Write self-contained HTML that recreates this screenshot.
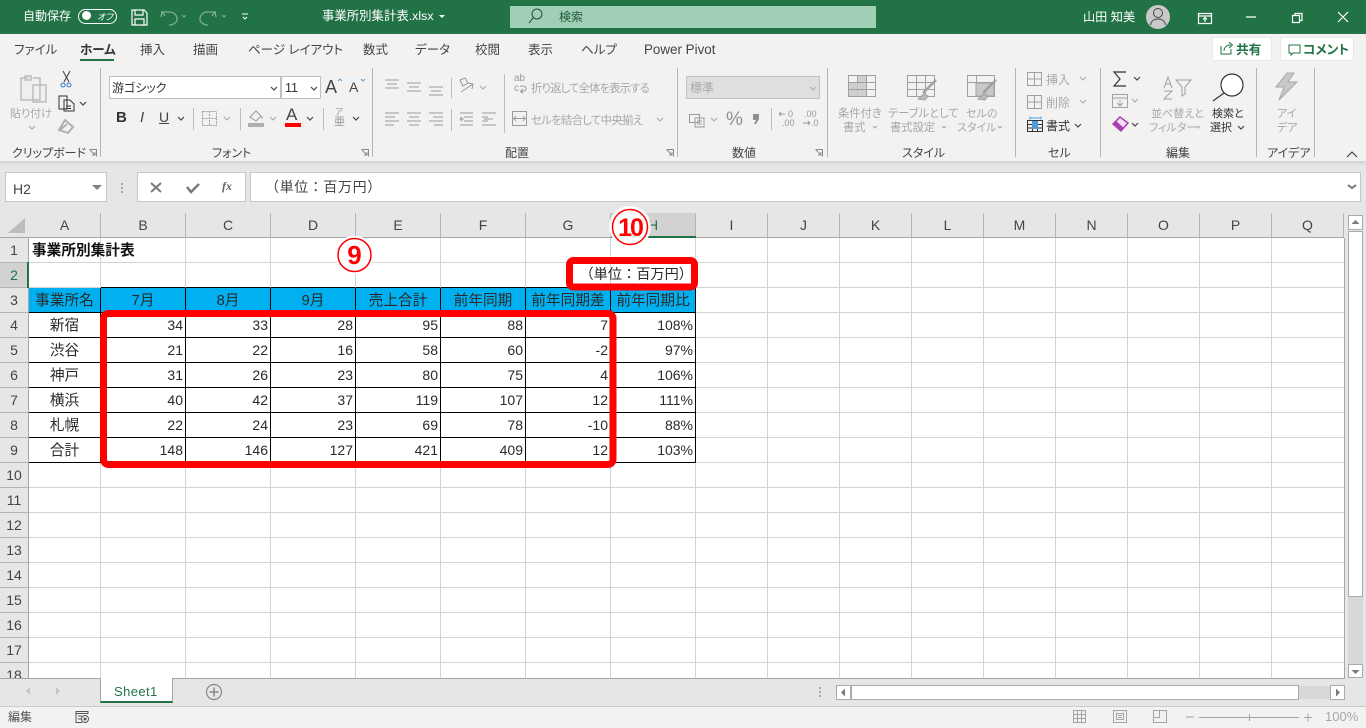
<!DOCTYPE html>
<html lang="ja"><head><meta charset="utf-8"><title>事業所別集計表.xlsx - Excel</title>
<style>
html,body{margin:0;padding:0}
body{width:1366px;height:728px;overflow:hidden;position:relative;background:#e6e6e6;font-family:"Liberation Sans","Noto Sans CJK JP",sans-serif;color:#444}
.a{position:absolute}
.t{position:absolute;white-space:nowrap;line-height:16px;font-size:12px;color:#444;font-feature-settings:"palt"}
.g{color:#a8a8a8}.w{color:#fff}
.tab{font-size:12.5px;top:42px;color:#444}
.gl{top:145px;color:#444;font-size:12px}
#sep i{position:absolute;top:68px;height:89px;width:1px;background:#b8b6b4}
#sheet table{border-collapse:separate;border-spacing:0;table-layout:fixed;width:667px;position:absolute;left:29px;top:238px}
#sheet td{height:25px;box-sizing:border-box;border:solid transparent;border-width:0 1px 1px 0;padding:0 2px 0 3px;font-size:14px;line-height:24px;text-align:right;white-space:nowrap;color:#2a2a2a}
#sheet td.c{text-align:center;font-size:14.67px;padding:3px 0 0;line-height:21px}
#sheet tr.k td{border-color:#000}
#sheet tr.h td{background:#00b0f0}
#sheet td.b{border-bottom-color:#000!important}
.ch{position:absolute;top:213px;height:24px;line-height:25px;text-align:center;font-size:14px;color:#444;box-sizing:border-box;border-right:1px solid #b4b4b4}
.rh{position:absolute;left:0;width:28px;height:24px;line-height:25px;text-align:center;font-size:14px;color:#444;border-bottom:1px solid #b4b4b4;background:#e6e6e6}
.btn{position:absolute;background:#fff;box-sizing:border-box;border:1px solid #ababab}
</style></head><body>

<!-- title bar -->
<div class="a" style="left:0;top:0;width:1366px;height:34px;background:#217346"></div>
<div class="t w" style="left:23px;top:8px;font-size:12px">自動保存</div>
<div class="a" style="left:78px;top:9px;width:37px;height:13px;border:1px solid #fff;border-radius:8px"></div>
<div class="a" style="left:82px;top:11px;width:9px;height:9px;border-radius:50%;background:#fff"></div>
<div class="t w" style="left:97px;top:9px;font-size:9px;font-style:italic">オフ</div>
<div class="a" style="left:510px;top:6px;width:366px;height:22px;background:#a0cfb5"></div>
<div class="t" style="left:559px;top:9px;font-size:12px;color:#1f5a3a">検索</div>
<div class="t w" style="left:322px;top:8px;font-size:12.4px">事業所別集計表.xlsx</div>
<div class="t w" style="left:1083px;top:9px;font-size:12.2px">山田 知美</div>

<!-- ribbon -->
<div class="a" style="left:0;top:34px;width:1366px;height:127px;background:#f3f2f1;box-shadow:0 2px 3px #cfcfcf"></div>
<div class="t tab" style="left:14px">ファイル</div>
<div class="t tab" style="left:80px;font-weight:bold;color:#333">ホーム</div>
<div class="a" style="left:80px;top:59px;width:34px;height:2px;background:#217346"></div>
<div class="t tab" style="left:140px">挿入</div>
<div class="t tab" style="left:193px">描画</div>
<div class="t tab" style="left:248px">ページ レイアウト</div>
<div class="t tab" style="left:363px">数式</div>
<div class="t tab" style="left:415px">データ</div>
<div class="t tab" style="left:475px">校閲</div>
<div class="t tab" style="left:528px">表示</div>
<div class="t tab" style="left:581px">ヘルプ</div>
<div class="t tab" style="left:644px;font-size:13.4px">Power Pivot</div>

<div class="a" style="left:1213px;top:38px;width:58px;height:22px;background:#fff;box-shadow:0 0 1px #bbb"></div>
<div class="t" style="left:1236px;top:42px;font-size:12.7px;font-weight:bold;color:#217346">共有</div>
<div class="a" style="left:1281px;top:38px;width:72px;height:22px;background:#fff;box-shadow:0 0 1px #bbb"></div>
<div class="t" style="left:1303px;top:42px;font-size:12.7px;font-weight:bold;color:#217346">コメント</div>

<div id="sep">
<i style="left:100px"></i><i style="left:372px"></i><i style="left:677px"></i><i style="left:827px"></i><i style="left:1015px"></i><i style="left:1100px"></i><i style="left:1256px"></i><i style="left:1314px"></i>
</div>

<!-- clipboard -->
<div class="t g" style="left:10px;top:106px;font-size:11px">貼り付け</div>
<div class="t gl" style="left:12px">クリップボード</div>
<!-- font -->
<div class="btn" style="left:109px;top:76px;width:172px;height:23px;border-color:#c0c0c0"></div>
<div class="btn" style="left:281px;top:76px;width:40px;height:23px;border-color:#c0c0c0"></div>
<div class="t" style="left:112px;top:80px;font-size:12px;color:#333">游ゴシック</div>
<div class="t" style="left:285px;top:80px;font-size:12.5px;color:#333">11</div>
<div class="t" style="left:325px;top:77px;font-size:18px;line-height:20px">A</div>
<div class="t" style="left:349px;top:79px;font-size:14px">A</div>
<div class="t" style="left:116px;top:110px;font-size:15px;font-weight:bold;color:#333">B</div>
<div class="t" style="left:140px;top:110px;font-size:15px;font-style:italic;color:#444">I</div>
<div class="t" style="left:159px;top:109px;font-size:14px;text-decoration:underline;color:#444">U</div>
<div class="t" style="left:286px;top:107px;font-size:17px;color:#444">A</div>
<div class="t" style="left:335px;top:106px;font-size:9px;line-height:12px;color:#999">ア</div>
<div class="t" style="left:334px;top:116px;font-size:11px;line-height:12px;color:#999">亜</div>
<div class="t gl" style="left:212px">フォント</div>
<!-- alignment -->
<div class="t g" style="left:531px;top:81px;font-size:11.4px;letter-spacing:-.9px">折り返して全体を表示する</div>
<div class="t g" style="left:531px;top:113px;font-size:11.4px;letter-spacing:-.7px">セルを結合して中央揃え</div>
<div class="t" style="left:514px;top:73px;font-size:10px;line-height:12px;color:#9a9a9a">ab</div>
<div class="t" style="left:514px;top:83px;font-size:10px;line-height:12px;color:#9a9a9a">c</div>
<div class="t gl" style="left:505px">配置</div>
<!-- number -->
<div class="a" style="left:686px;top:76px;width:134px;height:23px;box-sizing:border-box;background:#e1dfdd;border:1px solid #c0c0c0"></div>
<div class="t g" style="left:690px;top:80px">標準</div>
<div class="t" style="left:726px;top:109px;font-size:19px;line-height:22px;color:#8f8f8f">%</div>
<div class="t" style="left:788px;top:109px;font-size:9px;line-height:10px;color:#999">0</div>
<div class="t" style="left:782px;top:118px;font-size:9px;line-height:10px;color:#999">.00</div>
<div class="t" style="left:804px;top:109px;font-size:9px;line-height:10px;color:#999">.00</div>
<div class="t" style="left:811px;top:118px;font-size:9px;line-height:10px;color:#999">.0</div>
<div class="t gl" style="left:732px">数値</div>
<!-- styles -->
<div class="t g" style="left:838px;top:106px;font-size:11.3px">条件付き</div>
<div class="t g" style="left:843px;top:120px;font-size:11.3px">書式</div>
<div class="t g" style="left:888px;top:106px;font-size:11.3px">テーブルとして</div>
<div class="t g" style="left:890px;top:120px;font-size:11.3px">書式設定</div>
<div class="t g" style="left:966px;top:106px;font-size:11px">セルの</div>
<div class="t g" style="left:957px;top:120px;font-size:11px">スタイル</div>
<div class="t gl" style="left:902px">スタイル</div>
<!-- cells -->
<div class="t g" style="left:1046px;top:72px">挿入</div>
<div class="t g" style="left:1046px;top:95px">削除</div>
<div class="t" style="left:1046px;top:118px;color:#333">書式</div>
<div class="t gl" style="left:1048px">セル</div>
<!-- editing -->
<div class="t g" style="left:1151px;top:106px;font-size:11px">並べ替えと</div>
<div class="t g" style="left:1149px;top:120px;font-size:11px">フィルター</div>
<div class="t" style="left:1212px;top:106px;font-size:11px;color:#333">検索と</div>
<div class="t" style="left:1210px;top:120px;font-size:11px;color:#333">選択</div>
<div class="t gl" style="left:1166px">編集</div>
<div class="t g" style="left:1277px;top:106px;font-size:11px">アイ</div>
<div class="t g" style="left:1277px;top:120px;font-size:11px">デア</div>
<div class="t gl" style="left:1267px">アイデア</div>

<!-- formula bar -->
<div class="btn" style="left:5px;top:172px;width:102px;height:30px;border-color:#c6c6c6"></div>
<div class="t" style="left:13px;top:181px;font-size:14px">H2</div>
<div class="btn" style="left:137px;top:172px;width:109px;height:30px;border-color:#c6c6c6"></div>
<div class="btn" style="left:250px;top:172px;width:1111px;height:30px;border-color:#c6c6c6"></div>
<div class="a" style="left:265px;top:179px;font-size:14px;line-height:16px;white-space:nowrap;letter-spacing:.6px;color:#444">（単位：百万円）</div>
<div class="t" style="left:222px;top:178px;font-size:12px;font-style:italic;font-family:'Liberation Serif',serif;font-weight:bold;color:#666">fx</div>

<!-- sheet -->
<div id="sheet">
<div class="a" style="left:0;top:213px;width:1344px;height:25px;background:#e6e6e6"></div>
<div class="a" style="left:0;top:238px;width:29px;height:440px;overflow:hidden;background:#e6e6e6">
 <div class="rh" style="top:0">1</div><div class="rh" style="top:25px;background:#d2d2d2;color:#217346">2</div><div class="rh" style="top:50px">3</div><div class="rh" style="top:75px">4</div><div class="rh" style="top:100px">5</div><div class="rh" style="top:125px">6</div><div class="rh" style="top:150px">7</div><div class="rh" style="top:175px">8</div><div class="rh" style="top:200px">9</div><div class="rh" style="top:225px">10</div><div class="rh" style="top:250px">11</div><div class="rh" style="top:275px">12</div><div class="rh" style="top:300px">13</div><div class="rh" style="top:325px">14</div><div class="rh" style="top:350px">15</div><div class="rh" style="top:375px">16</div><div class="rh" style="top:400px">17</div><div class="rh" style="top:425px">18</div>
 <div class="a" style="left:28px;top:0;width:1px;height:440px;background:#a6a6a6"></div>
</div>
<div class="a" style="left:29px;top:238px;width:1315px;height:440px;background:#fff"></div>
<div class="a" style="left:27px;top:262px;width:2px;height:26px;background:#217346"></div>
<svg class="a" style="left:0;top:0" width="1366" height="728"><path fill="none" stroke="#d4d4d4" d="M29 262.5H1344M29 287.5H1344M29 312.5H1344M29 337.5H1344M29 362.5H1344M29 387.5H1344M29 412.5H1344M29 437.5H1344M29 462.5H1344M29 487.5H1344M29 512.5H1344M29 537.5H1344M29 562.5H1344M29 587.5H1344M29 612.5H1344M29 637.5H1344M29 662.5H1344M100.5 238V678M185.5 238V678M270.5 238V678M355.5 238V678M440.5 238V678M525.5 238V678M610.5 238V678M695.5 238V678M767.5 238V678M839.5 238V678M911.5 238V678M983.5 238V678M1055.5 238V678M1127.5 238V678M1199.5 238V678M1271.5 238V678"/></svg>
<div class="ch" style="left:29px;width:72px">A</div><div class="ch" style="left:101px;width:85px">B</div><div class="ch" style="left:186px;width:85px">C</div><div class="ch" style="left:271px;width:85px">D</div><div class="ch" style="left:356px;width:85px">E</div><div class="ch" style="left:441px;width:85px">F</div><div class="ch" style="left:526px;width:85px">G</div><div class="ch" style="left:611px;width:85px;background:#d2d2d2;color:#217346">H</div><div class="ch" style="left:696px;width:72px">I</div><div class="ch" style="left:768px;width:72px">J</div><div class="ch" style="left:840px;width:72px">K</div><div class="ch" style="left:912px;width:72px">L</div><div class="ch" style="left:984px;width:72px">M</div><div class="ch" style="left:1056px;width:72px">N</div><div class="ch" style="left:1128px;width:72px">O</div><div class="ch" style="left:1200px;width:72px">P</div><div class="ch" style="left:1272px;width:72px">Q</div>
<div class="a" style="left:0;top:237px;width:1344px;height:1px;background:#a6a6a6"></div>
<div class="a" style="left:611px;top:236px;width:85px;height:2px;background:#217346"></div>
<table>
<colgroup><col style="width:72px"><col style="width:85px"><col style="width:85px"><col style="width:85px"><col style="width:85px"><col style="width:85px"><col style="width:85px"><col style="width:85px"></colgroup>
<tr><td class="c" style="text-align:left;font-weight:bold;padding-left:3px;color:#111">事業所別集計表</td><td></td><td></td><td></td><td></td><td></td><td></td><td></td></tr>
<tr><td></td><td class="b"></td><td class="b"></td><td class="b"></td><td class="b"></td><td class="b"></td><td class="b"></td><td class="b"></td></tr>
<tr class="k h"><td class="c">事業所名</td><td class="c">7月</td><td class="c">8月</td><td class="c">9月</td><td class="c">売上合計</td><td class="c">前年同期</td><td class="c">前年同期差</td><td class="c">前年同期比</td></tr>
<tr class="k"><td class="c">新宿</td><td>34</td><td>33</td><td>28</td><td>95</td><td>88</td><td>7</td><td>108%</td></tr>
<tr class="k"><td class="c">渋谷</td><td>21</td><td>22</td><td>16</td><td>58</td><td>60</td><td>-2</td><td>97%</td></tr>
<tr class="k"><td class="c">神戸</td><td>31</td><td>26</td><td>23</td><td>80</td><td>75</td><td>4</td><td>106%</td></tr>
<tr class="k"><td class="c">横浜</td><td>40</td><td>42</td><td>37</td><td>119</td><td>107</td><td>12</td><td>111%</td></tr>
<tr class="k"><td class="c">札幌</td><td>22</td><td>24</td><td>23</td><td>69</td><td>78</td><td>-10</td><td>88%</td></tr>
<tr class="k"><td class="c">合計</td><td>148</td><td>146</td><td>127</td><td>421</td><td>409</td><td>12</td><td>103%</td></tr>
</table>
<div class="a" style="right:673px;top:266px;font-size:14.2px;line-height:16px;margin-top:1px;white-space:nowrap;color:#2a2a2a">（単位：百万円）</div>
</div>

<!-- scrollbars & status -->
<div class="a" style="left:1344px;top:238px;width:1px;height:440px;background:#a6a6a6"></div>
<div class="a" style="left:1348px;top:231px;width:15px;height:433px;background:#d8d8d8"></div>
<div class="btn" style="left:1348px;top:215px;width:15px;height:15px"></div>
<div class="btn" style="left:1348px;top:231px;width:15px;height:366px"></div>
<div class="btn" style="left:1348px;top:664px;width:15px;height:14px"></div>
<div class="a" style="left:0;top:678px;width:1345px;height:1px;background:#a6a6a6"></div>
<div class="a" style="left:100px;top:678px;width:73px;height:25px;box-sizing:border-box;background:#fff;border:solid #a6a6a6;border-width:0 1px 0 1px;border-bottom:2px solid #217346"></div>
<div class="t" style="left:114px;top:684px;font-size:13px;letter-spacing:.4px;color:#217346">Sheet1</div>
<div class="btn" style="left:836px;top:685px;width:15px;height:15px"></div>
<div class="btn" style="left:851px;top:685px;width:448px;height:15px"></div>
<div class="a" style="left:1299px;top:686px;width:31px;height:13px;background:#d8d8d8"></div>
<div class="btn" style="left:1330px;top:685px;width:15px;height:15px"></div>
<div class="a" style="left:0;top:706px;width:1366px;height:22px;background:#f3f2f1;border-top:1px solid #cbcbcb;box-sizing:border-box"></div>
<div class="t" style="left:8px;top:709px;font-size:12px;color:#555">編集</div>
<div class="t" style="left:1325px;top:709px;font-size:13px;color:#a8a8a8">100%</div>

<!-- icons -->
<svg class="a" style="left:0;top:0;pointer-events:none" width="1366" height="728" fill="none">
<!-- title bar -->
<g stroke="#fff" stroke-width="1.2">
<path d="M132 10h12l3 3v12h-15zM135 10v5h8v-5M135 25v-6h9v6"/>
<path d="M1198.500 13.500h13v10h-13zM1198.500 16h13M1205 22v-4M1203 19.500l2-2 2 2M1246 17h10M1292.500 15.500h7v7h-7zM1295 15.500v-2h7v7h-2.500M1338 12l10 10M1348 12l-10 10"/>
</g>
<path stroke="#7fae93" stroke-width="1.3" d="M165 16l-3-4 M162 12l-1 5M161 12h8c6 0 8 4 8 7s-3 6-8 6M212 16l3-4M215 12l1 5M216 12h-8c-6 0-8 4-8 7s3 6 8 6"/>
<path stroke="#7fae93" d="M182 15l2 2 2-2M222 15l2 2 2-2"/>
<path stroke="#fff" d="M242 14h6M243 17l2 2 2-2"/>
<path fill="#fff" d="M439 15h6l-3 3z"/>
<circle cx="537" cy="14" r="5" stroke="#1f5a3a" stroke-width="1.100"/><path stroke="#1f5a3a" stroke-width="1.100" d="M533 18l-4 5"/>
<circle cx="1158" cy="17" r="12" fill="#c9c9c9"/><circle cx="1158" cy="13" r="4.500" stroke="#444"/><path stroke="#444" d="M1150.500 25c1-5 4-6 7.500-6s6.500 1 7.500 6"/>
<!-- share -->
<path stroke="#217346" d="M1221 46v8h10v-5M1224 51c0-4 3-6 7-6M1229 42l3.500 3-3.500 3M1289 45h11v8h-7l-2 2v-2h-2z"/>
<!-- clipboard -->
<path stroke="#bdbdbd" stroke-width="1.500" d="M33 78h7v22H21V78h7M25 76h6v4h-6zM33 85h13v17H33z" fill="#f0efee"/>
<path stroke="#3a3a3a" d="M63 71l6 11M70 71l-6 11"/><circle cx="63" cy="85" r="2" stroke="#2f78c4"/><circle cx="69" cy="85" r="2" stroke="#2f78c4"/>
<path stroke="#333" d="M59 96h8v13h-8zM64 100h6l4 4v7h-10zM66 106h5M66 108.500h5"/>
<path stroke="#b0b0b0" stroke-width="2" d="M60 130l7-6M65 120l8 7-5 6-9-3z"/>
<!-- align -->
<path stroke="#9a9a9a" d="M385 80h14M387 84h10M385 88h14M407 83h14M409 87h10M407 91h14M429 87h14M431 91h10M429 95h14M385 113h14M385 117h10M385 121h14M385 125h9M407 113h14M409 117h10M407 121h14M409 125h10M429 113h14M433 117h10M429 121h14M434 125h9M460 113h13M464 117h9M464 121h9M460 125h13M482 113h14M482 117h6M482 121h6M482 125h14M484 119h9M464 119h-4M460 119l2-2M460 119l2 2"/>
<path stroke="#bdbdbd" d="M451.500 78v20M451.500 109v22M504.500 74v59M193.500 108v22M240.500 108v22M323.500 108v22M771.500 108v22"/>
<path stroke="#9a9a9a" d="M461 92l12-8M468 83l5 1-1 5M460 80l5-2 3 5-5 3zM512.500 111.500h14v14h-14zM512.500 118.500h14M516 116l-2 2.500 2 2.500M523 116l2 2.500-2 2.500"/>
<path stroke="#9a9a9a" d="M520 86c4 0 6 0 6 2.500s-2 3-5 3M523 89l-2.500 2.500 2.500 2"/>
<!-- font row -->
<path stroke="#5aa0d8" d="M338 81l2-2 2 2M361 79l2 2 2-2"/>
<path stroke="#a0a0a0" stroke-dasharray="2 1" d="M202.500 111.500h14v14h-14zM202.500 118.500h14M209.500 111v15"/>
<path fill="#aeaeae" d="M248 123h16v4h-16z"/><path stroke="#999" d="M250 117l6-6 5 5-5 5zM262 116v3"/>
<path fill="#f00" d="M285 123h16v4h-16z"/>
<!-- number -->
<path stroke="#9a9a9a" d="M689.500 114.500h10v8h-10zM695 118h9v9h-9zM697 121h5M697 124h5"/>
<path fill="#8f8f8f" d="M753 114h6v5l-3 5h-2l2-4h-3z"/>
<path stroke="#9a9a9a" d="M779 114h6M779 114l2-2M779 114l2 2M803 123h7M810 123l-2-2M810 123l-2 2"/>
<!-- styles -->
<g stroke="#a0a0a0"><path d="M848.500 75.500h27v21h-27zM848.500 82.500h27M848.500 89.500h27M857.500 75.500v21M866.500 75.500v21" /><path fill="#c8c8c8" d="M857.500 75.500h9v7h-9zM848.500 82.500h18v7h-18zM848.500 89.500h18v7h-18z" opacity=".8"/><path d="M907.500 75.500h27v21h-27zM907.500 82.500h27M907.500 89.500h27M916.500 75.500v21M925.500 75.500v21"/><path stroke-width="2.500" d="M936 80l-13 13"/><path fill="#bbb" d="M924 94l-6 5 7 1 3-4z"/><path d="M967.500 75.500h27v21h-27zM967.500 82.500h27M976.500 75.500v7"/><path fill="#c8c8c8" d="M976 83h18v13h-18z"/><path stroke-width="2.500" d="M996 80l-13 13"/><path fill="#bbb" d="M984 94l-6 5 7 1 3-4z"/></g>
<!-- cells -->
<path stroke="#a0a0a0" d="M1027.500 72.500h14v13h-14zM1027.500 79h14M1034.500 72.500v13M1027.500 95.500h14v13h-14zM1027.500 102h14M1034.500 95.500v13"/>
<path stroke="#333" d="M1027.500 120.500h15v11h-15zM1027.500 124.500h15M1027.500 128h15M1032.500 120.500v11M1037.500 120.500v11"/>
<path fill="#4a9fdc" d="M1032 121h6v8h-6z"/><path stroke="#4a9fdc" d="M1030 118h11M1030 116.500v3M1041 116.500v3"/>
<!-- editing -->
<path stroke="#333" stroke-width="1.200" d="M1126 72h-12l6 7-6 7h12"/>
<path stroke="#a0a0a0" d="M1112.500 94.500h15v13h-15zM1112.500 98h15M1120 100v6M1117 103l3 3 3-3"/>
<path stroke="#a83fb0" stroke-width="1.500" fill="#f3dff5" d="M1113 124l7-7 8 6-7 8z"/><path fill="#a83fb0" d="M1116 121l-3 3 8 7 3-3z"/>
<path stroke="#a0a0a0" d="M1164 88l4-11 4 11M1165.500 84h5M1164 91h8l-8 8h8M1176 80h15l-6 7v7l-3 2v-9z"/>
<circle cx="1232" cy="85" r="11" stroke="#333" stroke-width="1.200" fill="#fff"/><path stroke="#333" stroke-width="1.200" d="M1224 93l-11 8"/>
<path fill="#c8c8c8" stroke="#a8a8a8" d="M1287 73l-11 14h8l-5 13 18-18h-9l6-9z"/>
<path stroke="#333" d="M1347 157l5-5 5 5"/>
<!-- launchers -->
<path stroke="#8a8a8a" d="M89.500 149.500h7v7M90 150l5 5M92 155h3v-3M361.500 149.500h7v7M362 150l5 5M364 155h3v-3M666.500 149.500h7v7M667 150l5 5M669 155h3v-3M815.500 149.500h7v7M816 150l5 5M818 155h3v-3"/>
<!-- dark chevrons -->
<path stroke="#444" stroke-width="1.200" d="M80 102l3 3 3-3M271 87l3 3 3-3M311 87l3 3 3-3M178 117l3 3 3-3M307 117l3 3 3-3M353 117l3 3 3-3M1075 124l3 3 3-3M1134 77l3 3 3-3M1132 123l3 3 3-3M1238 126l3 3 3-3"/>
<!-- grey chevrons -->
<path stroke="#a8a8a8" stroke-width="1.100" d="M29 126l3 3 3-3M224 117l3 3 3-3M270 117l3 3 3-3M480 86l3 3 3-3M657 118l3 3 3-3M810 87l3 3 3-3M711 118l3 3 3-3M873 126l2 2 2-2M942 126l2 2 2-2M998 126l2 2 2-2M1080 77l3 3 3-3M1080 100l3 3 3-3M1132 99l3 3 3-3M1196 126l2 2 2-2"/>
<!-- formula -->
<path stroke="#a8a8a8" stroke-dasharray="2 2" stroke-width="2" d="M122 183v10"/>
<path stroke="#7a7a7a" stroke-width="2" d="M151 183l10 9M161 183l-10 9"/>
<path stroke="#7a7a7a" stroke-width="2.500" d="M187 187l4 5 8-8"/>
<path fill="#808080" d="M92 185h10l-5 5z"/>
<path stroke="#777" stroke-width="2" d="M1348 185l4 3 4-3"/>
<path fill="#bdbdbd" d="M25 218v15H8z"/>
<!-- scroll arrows -->
<path fill="#7a7a7a" d="M1355.500 220l4 4h-8zM1355.500 674l4-4h-8zM841 692.500l4-4v8zM1340 692.500l-4-4v8z"/>
<path fill="#c4c4c4" d="M26 691l4-4v8zM60 691l-4-4v8z"/>
<circle cx="214" cy="692" r="7.500" stroke="#888" stroke-width="1.200"/><path stroke="#888" stroke-width="1.500" d="M209.500 692h9M214 687.500v9"/>
<path stroke="#a8a8a8" stroke-width="2" stroke-dasharray="2 2" d="M820 687v10"/>
<!-- status bar -->
<path stroke="#555" d="M76 711.500h12v2H76zM76 711.500v11h6M78 716h4M78 719h3"/><circle cx="85" cy="719" r="3.500" stroke="#555"/><circle cx="85" cy="719" r="1.500" fill="#555"/>
<path stroke="#a4a4a4" d="M1073.500 710.500h12v12h-12zM1073.500 714.500h12M1073.500 718.500h12M1077.500 710.500v12M1081.500 710.500v12M1113.500 710.500h13v12h-13zM1116.500 713.500h7v6h-7zM1118 715.500h4M1118 717.500h4M1153.500 710.500h13v12h-13zM1159.500 710.500v7h-6M1186 717h8M1199 717.500h100M1249.500 714v7M1304 717.500h8M1308 713.500v8"/>
<!-- red callouts -->
<rect x="103.500" y="313.500" width="509.500" height="151" rx="5" stroke="#f00" stroke-width="7"/>
<rect x="569.500" y="260.500" width="125" height="26.500" rx="4" stroke="#f00" stroke-width="7"/>
<circle cx="354.500" cy="255" r="19.500" fill="#fff" opacity=".92"/>
<circle cx="354.500" cy="255" r="16.500" stroke="#f00" stroke-width="1.500"/>
<circle cx="630" cy="227" r="21" fill="#fff" opacity=".92"/>
<circle cx="630" cy="227" r="17.500" stroke="#f00" stroke-width="1.500"/>
<text x="354.500" y="264" text-anchor="middle" font-family="Liberation Sans, sans-serif" font-weight="bold" font-size="26" fill="#f00">9</text>
<text x="630" y="236" text-anchor="middle" font-family="Liberation Sans, sans-serif" font-weight="bold" font-size="25" letter-spacing="-2" fill="#f00">10</text>
</svg>
</body></html>
